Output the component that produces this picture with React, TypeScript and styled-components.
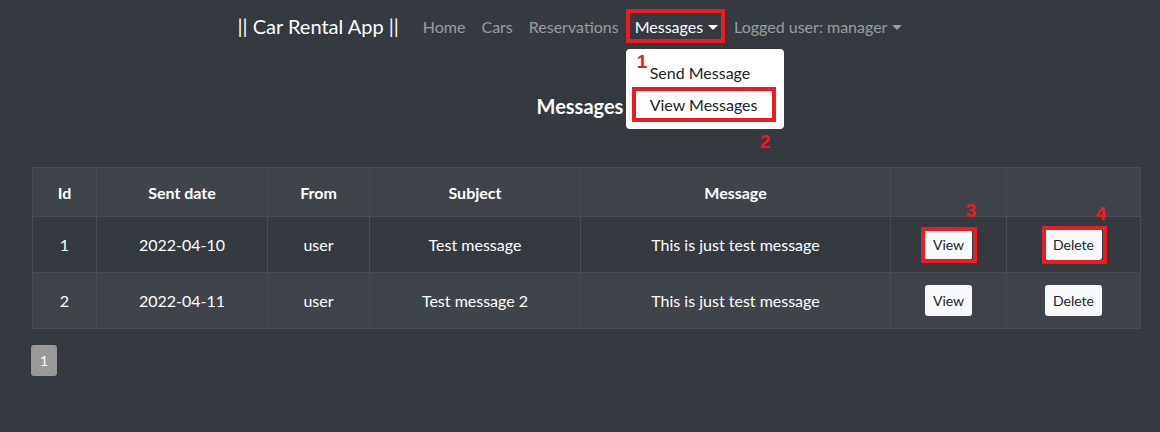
import React from "react";
import styled, { createGlobalStyle } from "styled-components";

const Global = createGlobalStyle`
  html, body { margin: 0; padding: 0; background: #343a40; }
  body { font-family: Lato, "Liberation Sans", sans-serif; color: #ffffff; font-size: 16px; }
  * { box-sizing: border-box; }
`;

const Page = styled.div`
  width: 1160px;
  height: 432px;
  background: #343a40;
  overflow: hidden;
`;

const Navbar = styled.nav`
  height: 54px;
  display: flex;
  align-items: center;
  justify-content: center;
  padding: 0 12px 2px 0;
`;

const Brand = styled.div`
  font-size: 20px;
  color: #fff;
  margin-right: 16px;
`;

const NavList = styled.div`
  display: flex;
  align-items: center;
`;

const NavItem = styled.div`
  position: relative;
`;

const NavLink = styled.span<{ $active?: boolean }>`
  display: inline-flex;
  align-items: center;
  padding: 8px;
  font-size: 16px;
  line-height: 19px;
  color: ${(p) => (p.$active ? "#ffffff" : "rgba(255,255,255,0.5)")};
`;

const Caret = styled.span`
  display: inline-block;
  margin-left: 5px;
  border-top: 5px solid currentColor;
  border-left: 5px solid transparent;
  border-right: 5px solid transparent;
  margin-top: 2px;
`;

const Mark = styled.div`
  position: absolute;
  border: 4px solid #ed1c24;
  pointer-events: none;
`;

const Num = styled.span`
  position: absolute;
  color: #ed1c24;
  font-family: "Liberation Sans", Arial, sans-serif;
  font-weight: bold;
  font-size: 19px;
  line-height: 1;
`;

const Menu = styled.div`
  position: absolute;
  left: -1px;
  top: 40px;
  width: 158px;
  background: #fff;
  border-radius: 4px;
  padding: 8px 0;
  z-index: 5;
`;

const MenuItem = styled.div`
  padding: 4px 24px;
  font-size: 16px;
  line-height: 24px;
  color: #212529;
`;

const Heading = styled.h4`
  margin: 40px 0 0;
  text-align: center;
  font-size: 20px;
  font-weight: bold;
  line-height: 24px;
`;

const Content = styled.div`
  padding: 0 20px 0 32px;
`;

const Table = styled.table`
  margin-top: 49px;
  width: 1108px;
  border-collapse: collapse;
  border: 1px solid #84878a;
  table-layout: fixed;
`;

const Row = styled.tr<{ $shade?: boolean }>`
  background: ${(p) => (p.$shade ? "#3e444a" : "#343a40")};
`;

const Th = styled.th`
  padding: 12px;
  height: 49px;
  font-size: 16px;
  font-weight: bold;
  text-align: center;
  border: 1px solid #454d55;
`;

const Td = styled.td`
  padding: 12px;
  height: 56px;
  font-size: 16px;
  text-align: center;
  border: 1px solid #454d55;
`;

const Btn = styled.span`
  display: inline-block;
  background: #f8f9fa;
  color: #212529;
  border-radius: 3px;
  padding: 5px 8px;
  font-size: 14px;
  line-height: 21px;
  position: relative;
`;

const Pager = styled.div`
  margin-top: 16px;
  width: 26px;
  height: 31px;
  display: flex;
  align-items: center;
  justify-content: center;
  background: #999999;
  border-radius: 3px;
  font-size: 14px;
  color: #fff;
  margin-left: -1px;
`;

const widths = [64, 171, 102, 211, 310, 116, 134];
const head = ["Id", "Sent date", "From", "Subject", "Message", "", ""];
const rows = [
  ["1", "2022-04-10", "user", "Test message", "This is just test message"],
  ["2", "2022-04-11", "user", "Test message 2", "This is just test message"],
];

export default function App() {
  return (
    <Page>
      <Global />
      <Navbar>
        <Brand>|| Car Rental App ||</Brand>
        <NavList>
          <NavLink>Home</NavLink>
          <NavLink>Cars</NavLink>
          <NavLink>Reservations</NavLink>
          <NavItem>
            <NavLink $active>
              Messages
              <Caret />
            </NavLink>
            <Mark style={{ left: -1, top: 0, width: 99, height: 34 }} />
            <Menu>
              <MenuItem>Send Message</MenuItem>
              <MenuItem>View Messages</MenuItem>
              <Mark style={{ left: 6, top: 38, width: 144, height: 35 }} />
              <Num style={{ left: 11, top: 3 }}>1</Num>
              <Num style={{ left: 134, top: 83 }}>2</Num>
            </Menu>
          </NavItem>
          <NavLink>
            Logged user: manager
            <Caret />
          </NavLink>
        </NavList>
      </Navbar>
      <Heading>Messages</Heading>
      <Content>
        <Table>
          <colgroup>
            {widths.map((w, i) => (
              <col key={i} style={{ width: w }} />
            ))}
          </colgroup>
          <thead>
            <Row $shade>
              {head.map((h, i) => (
                <Th key={i}>{h}</Th>
              ))}
            </Row>
          </thead>
          <tbody>
            {rows.map((r, ri) => (
              <Row key={ri} $shade={ri % 2 === 1}>
                {r.map((c, ci) => (
                  <Td key={ci}>{c}</Td>
                ))}
                <Td>
                  <Btn>
                    View
                    {ri === 0 && (
                      <>
                        <Mark style={{ left: -4, top: -2, right: -5, bottom: -3 }} />
                        <Num style={{ right: -4, top: -28 }}>3</Num>
                      </>
                    )}
                  </Btn>
                </Td>
                <Td>
                  <Btn>
                    Delete
                    {ri === 0 && (
                      <>
                        <Mark style={{ left: -3, top: -3, right: -5, bottom: -4 }} />
                        <Num style={{ right: -4, top: -25 }}>4</Num>
                      </>
                    )}
                  </Btn>
                </Td>
              </Row>
            ))}
          </tbody>
        </Table>
        <Pager>1</Pager>
      </Content>
    </Page>
  );
}
